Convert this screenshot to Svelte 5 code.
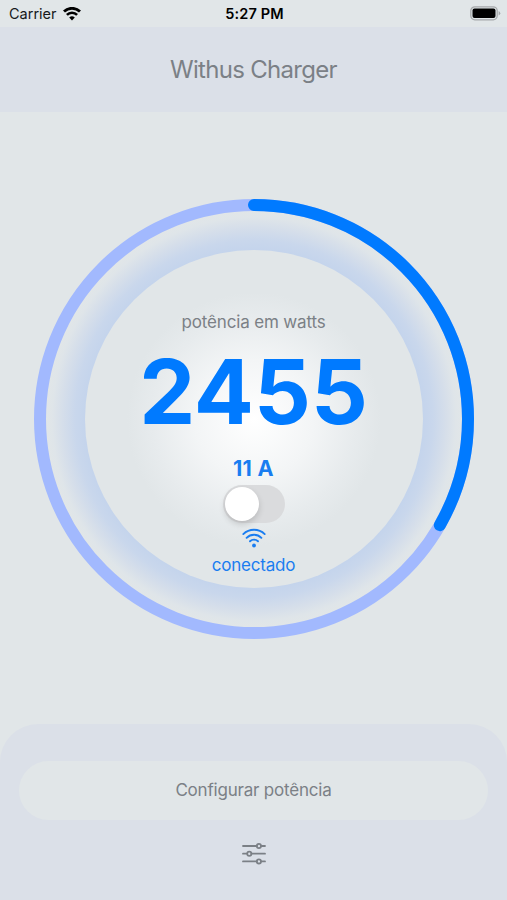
<script>
    let power = 2455;
    let amps = 11;
    let charging = false;

    const radius = 214;
    const circumference = 2 * Math.PI * radius;
    const progress = 0.3325;

    function toggleCharging() {
        charging = !charging;
    }
</script>

<div class="screen">
    <div class="status-bar">
        <div class="carrier">
            <span>Carrier</span>
            <svg width="18" height="14" viewBox="0 0 18 14" fill="none" stroke="#000">
                <path d="M1 4.6a11.3 11.3 0 0 1 16 0" stroke-width="2.8" />
                <path d="M3.9 7.9a7.2 7.2 0 0 1 10.2 0" stroke-width="2.6" />
                <path d="M9 13.4l-2.8-2.9a4 4 0 0 1 5.6 0z" fill="#000" stroke="none" />
            </svg>
        </div>
        <span class="time">5:27 PM</span>
        <svg class="battery" width="31" height="15" viewBox="0 0 31 15">
            <rect x="0.8" y="0.8" width="26.4" height="13" rx="4" fill="none" stroke="#a5a8aa" stroke-width="1.3" />
            <rect x="2.5" y="2.5" width="23" height="9.6" rx="2" fill="#000" />
            <path d="M28.6 5v4.6q1.7-.8 1.7-2.3T28.6 5z" fill="#a5a8aa" />
        </svg>
    </div>

    <header class="title-bar">
        <h1>Withus Charger</h1>
    </header>

    <main>
        <div class="gauge">
            <svg class="ring" width="440" height="440" viewBox="0 0 440 440">
                <defs>
                    <radialGradient id="glow" gradientUnits="userSpaceOnUse" cx="220" cy="220" r="208">
                        <stop offset="0.81" stop-color="#c4d4ec" />
                        <stop offset="0.86" stop-color="#c9d7ec" />
                        <stop offset="0.92" stop-color="#d5deea" />
                        <stop offset="0.97" stop-color="#dfe5e9" />
                        <stop offset="1" stop-color="#e1e6e8" />
                    </radialGradient>
                    <radialGradient id="disc" gradientUnits="userSpaceOnUse" cx="220" cy="220" r="169">
                        <stop offset="0" stop-color="#ffffff" />
                        <stop offset="0.35" stop-color="#f3f5f6" />
                        <stop offset="0.6" stop-color="#e7ebed" />
                        <stop offset="0.75" stop-color="#e1e6e8" />
                    </radialGradient>
                </defs>
                <circle cx="220" cy="220" r="208" fill="url(#glow)" />
                <circle cx="220" cy="220" r="169" fill="url(#disc)" />
                <circle cx="220" cy="220" r={radius} fill="none" stroke="#a2b9fe" stroke-width="12" />
                <circle
                    cx="220"
                    cy="220"
                    r={radius}
                    fill="none"
                    stroke="#007aff"
                    stroke-width="12"
                    stroke-linecap="round"
                    stroke-dasharray="{circumference * progress} {circumference}"
                    transform="rotate(-90 220 220)"
                />
            </svg>

            <div class="reading">
                <p class="label">potência em watts</p>
                <p class="power">{power}</p>
                <p class="amps">{amps} A</p>
                <button class="switch" class:on={charging} on:click={toggleCharging} aria-label="Carregar">
                    <span class="knob"></span>
                </button>
                <svg class="wifi" width="24" height="20" viewBox="0 0 24 20" fill="none" stroke="#1a7df0" stroke-width="1.9" stroke-linecap="round">
                    <path d="M1.3 6.1a15.3 15.3 0 0 1 21.4 0" />
                    <path d="M4.6 9.8a10.4 10.4 0 0 1 14.8 0" />
                    <path d="M8 13.3a5.7 5.7 0 0 1 8 0" />
                    <circle cx="12" cy="17.5" r="1.9" fill="#1a7df0" stroke="none" />
                </svg>
                <p class="connection">conectado</p>
            </div>
        </div>
    </main>

    <footer class="panel">
        <button class="configure">Configurar potência</button>
        <svg width="24" height="22" viewBox="0 0 24 22" fill="none" stroke="#7b8086" stroke-width="1.8" stroke-linecap="round">
            <path d="M1 3h13.8M19 3h4M1 10.7h4.2M9.4 10.7H23M1 18.4h13.8M19 18.4h4" />
            <circle cx="16.9" cy="3" r="2.1" />
            <circle cx="7.3" cy="10.7" r="2.1" />
            <circle cx="16.9" cy="18.4" r="2.1" />
        </svg>
    </footer>
</div>

<style>
    :global(body) {
        margin: 0;
        background-color: #e1e6e8;
    }

    .screen {
        display: flex;
        flex-direction: column;
        width: 100%;
        height: 900px;
        overflow: hidden;
        background-color: #e1e6e8;
        color: #7b8086;
        font-family: Inter, Roboto, sans-serif;
    }

    h1, p {
        margin: 0;
        font-weight: 400;
    }

    button {
        border: none;
        padding: 0;
        font-family: inherit;
        color: inherit;
        cursor: pointer;
    }

    .status-bar {
        display: grid;
        grid-template-columns: 1fr auto 1fr;
        align-items: center;
        height: 27px;
        padding: 0 6px 0 9px;
        box-sizing: border-box;
        color: #17191b;
        font-size: 14.5px;
    }

    .carrier {
        display: flex;
        align-items: center;
        gap: 6px;
    }

    .time {
        margin-right: 1px;
        color: #000;
        font-weight: 600;
        letter-spacing: 0.15px;
    }

    .battery {
        justify-self: end;
    }

    .title-bar {
        display: flex;
        align-items: center;
        justify-content: center;
        height: 85px;
        background-color: #dbe0e8;
    }

    h1 {
        font-size: 24px;
        letter-spacing: -0.7px;
    }

    main {
        flex: 1;
        display: flex;
        justify-content: center;
        padding-top: 87px;
    }

    .gauge {
        display: grid;
        width: 440px;
        height: 440px;
    }

    .ring, .reading {
        grid-area: 1 / 1;
    }

    .reading {
        display: flex;
        flex-direction: column;
        align-items: center;
        padding-top: 113px;
    }

    .label {
        font-size: 17px;
        line-height: 20px;
        letter-spacing: -0.15px;
    }

    .power {
        margin-top: 15px;
        color: #007aff;
        font-size: 89px;
        font-weight: 700;
        line-height: 90px;
    }

    .amps {
        margin-top: 19px;
        color: #1a7df0;
        font-size: 21.5px;
        font-weight: 700;
        line-height: 24px;
        letter-spacing: 0.3px;
    }

    .switch {
        display: flex;
        width: 62px;
        height: 38px;
        margin-top: 5px;
        padding: 2px;
        border-radius: 19px;
        background-color: #dadbdd;
    }

    .switch.on {
        justify-content: flex-end;
        background-color: #007aff;
    }

    .knob {
        width: 34px;
        height: 34px;
        border-radius: 50%;
        background-color: #fff;
        box-shadow: 0 3px 6px rgba(0, 0, 0, 0.16);
    }

    .wifi {
        margin-top: 5px;
    }

    .connection {
        margin-top: 7px;
        color: #1a7df0;
        font-size: 17px;
        line-height: 20px;
        letter-spacing: -0.2px;
    }

    .panel {
        display: flex;
        flex-direction: column;
        align-items: center;
        gap: 23px;
        height: 176px;
        padding: 37px 19px 0;
        box-sizing: border-box;
        border-radius: 38px 38px 0 0;
        background-color: #dbe0e8;
    }

    .configure {
        width: 100%;
        height: 59px;
        padding-bottom: 2px;
        border-radius: 30px;
        background-color: #e1e6e8;
        font-size: 17px;
        letter-spacing: -0.2px;
    }
</style>
